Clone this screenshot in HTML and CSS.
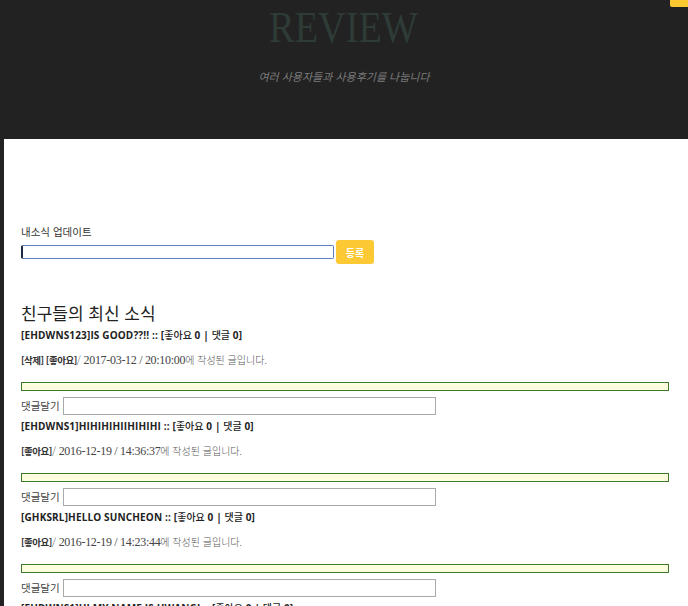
FILE: index.html
```html
<!DOCTYPE html>
<html lang="ko">
<head>
<meta charset="utf-8">
<title>REVIEW</title>
<link rel="stylesheet" href="styles.css">
</head>
<body>
<div class="corner"></div>
<header class="header">
  <h1 class="title"><span>REVIEW</span></h1>
  <p class="subtitle">여러 사용자들과 사용후기를 나눕니다</p>
</header>
<main class="main">
  <section class="update">
    <label class="update-label">내소식 업데이트</label>
    <div class="update-row">
      <input class="update-input" type="text">
      <button class="btn-submit">등록</button>
    </div>
  </section>
  <section class="feed">
    <h2 class="feed-title">친구들의 최신 소식</h2>

    <article class="post">
      <h3 class="post-head">[EHDWNS123]IS GOOD??!! :: [<span class="ko">좋아요</span> 0 | <span class="ko">댓글</span> 0]</h3>
      <p class="post-meta"><b>[삭제] [좋아요]</b>/ <span class="date">2017-03-12 / 20:10:00</span>에 작성된 글입니다.</p>
      <div class="post-bar"></div>
      <div class="comment-row"><span class="comment-label">댓글달기</span><input class="comment-input" type="text"></div>
    </article>

    <article class="post">
      <h3 class="post-head">[EHDWNS1]HIHIHIHIIHIHIHI :: [<span class="ko">좋아요</span> 0 | <span class="ko">댓글</span> 0]</h3>
      <p class="post-meta"><b>[좋아요]</b>/ <span class="date">2016-12-19 / 14:36:37</span>에 작성된 글입니다.</p>
      <div class="post-bar"></div>
      <div class="comment-row"><span class="comment-label">댓글달기</span><input class="comment-input" type="text"></div>
    </article>

    <article class="post">
      <h3 class="post-head">[GHKSRL]HELLO SUNCHEON :: [<span class="ko">좋아요</span> 0 | <span class="ko">댓글</span> 0]</h3>
      <p class="post-meta"><b>[좋아요]</b>/ <span class="date">2016-12-19 / 14:23:44</span>에 작성된 글입니다.</p>
      <div class="post-bar"></div>
      <div class="comment-row"><span class="comment-label">댓글달기</span><input class="comment-input" type="text"></div>
    </article>

    <article class="post">
      <h3 class="post-head">[EHDWNS1]HI MY NAME IS HWANGI :: [<span class="ko">좋아요</span> 0 | <span class="ko">댓글</span> 0]</h3>
      <p class="post-meta"><b>[좋아요]</b>/ <span class="date">2016-12-19 / 14:20:11</span>에 작성된 글입니다.</p>
      <div class="post-bar"></div>
      <div class="comment-row"><span class="comment-label">댓글달기</span><input class="comment-input" type="text"></div>
    </article>
  </section>
</main>
</body>
</html>
```
FILE: styles.css
```css
html, body {
  margin: 0;
  padding: 0;
  background: #222222;
}
body {
  font-family: "Noto Sans", "Noto Sans CJK KR", sans-serif;
  color: #333;
  position: relative;
}
.corner {
  position: absolute;
  top: 0;
  right: 0;
  width: 18px;
  height: 7px;
  background: #fcc932;
  border-bottom-left-radius: 2px;
}
.header {
  height: 139px;
  text-align: center;
  overflow: hidden;
}
.title {
  margin: 0;
  padding-top: 6px;
  font-family: "Liberation Serif", serif;
  font-weight: normal;
  font-size: 44px;
  line-height: 44px;
  color: #2e3b37;
}
.title span {
  display: inline-block;
  transform: scaleX(0.87);
}
.subtitle {
  margin: 19px 0 0;
  font-family: "Noto Sans CJK KR", sans-serif;
  font-style: italic;
  font-size: 11px;
  line-height: 14px;
  color: #7b7b7b;
}
.main {
  margin-left: 4px;
  background: #fff;
  padding: 86px 19px 40px 17px;
}
.update-label {
  display: block;
  font-family: "Noto Sans CJK KR", sans-serif;
  font-size: 10.5px;
  line-height: 14px;
  color: #333;
}
.update-row {
  display: flex;
  align-items: center;
  gap: 2px;
  margin-top: 1px;
}
.update-input {
  width: 313px;
  height: 14px;
  box-sizing: border-box;
  border: 1px solid #5a7fc0;
  border-left: 2px solid #1d2a44;
  border-radius: 2px;
  padding: 0;
  margin: 0;
  outline: none;
}
.btn-submit {
  width: 38px;
  height: 24px;
  border: none;
  border-radius: 3px;
  background: #fcc934;
  color: #fff;
  font-family: "Noto Sans CJK KR", sans-serif;
  font-weight: bold;
  font-size: 10px;
  padding: 0;
}
.feed {
  margin-top: 38px;
}
.feed-title {
  margin: 0 0 4px;
  font-family: "Noto Sans CJK KR", sans-serif;
  font-weight: normal;
  font-size: 17px;
  line-height: 22px;
  color: #222;
}
.post-head {
  margin: 0;
  font-family: "Open Sans", "Noto Sans CJK KR", sans-serif;
  font-weight: 700;
  font-size: 10px;
  line-height: 14px;
  color: #222;
  letter-spacing: 0.15px;
}
.post-head .ko {
  font-family: "Noto Sans CJK KR", sans-serif;
  font-weight: 500;
  letter-spacing: 0;
}
.post-meta {
  margin: 11px 0 0;
  font-family: "Noto Sans CJK KR", sans-serif;
  font-size: 10px;
  line-height: 14px;
  color: #555;
  font-weight: 300;
}
.post-meta b {
  font-weight: 700;
  font-size: 9.5px;
  letter-spacing: -0.5px;
  color: #333;
}
.post-meta .date {
  font-family: "Liberation Serif", serif;
  font-size: 12px;
  letter-spacing: -0.3px;
  font-weight: normal;
  color: #444;
}
.post-bar {
  margin-top: 15px;
  height: 9px;
  box-sizing: border-box;
  border: 1px solid #3d7b2b;
  background: #ffffdf;
}
.comment-row {
  display: flex;
  align-items: center;
  gap: 3px;
  height: 18px;
  margin-top: 6px;
  margin-bottom: 4px;
}
.comment-label {
  font-family: "Noto Sans CJK KR", sans-serif;
  font-size: 10.5px;
  line-height: 14px;
  color: #444;
}
.comment-input {
  width: 373px;
  height: 18px;
  box-sizing: border-box;
  border: 1px solid #a9a9a9;
  padding: 0;
  margin: 0;
}
```
